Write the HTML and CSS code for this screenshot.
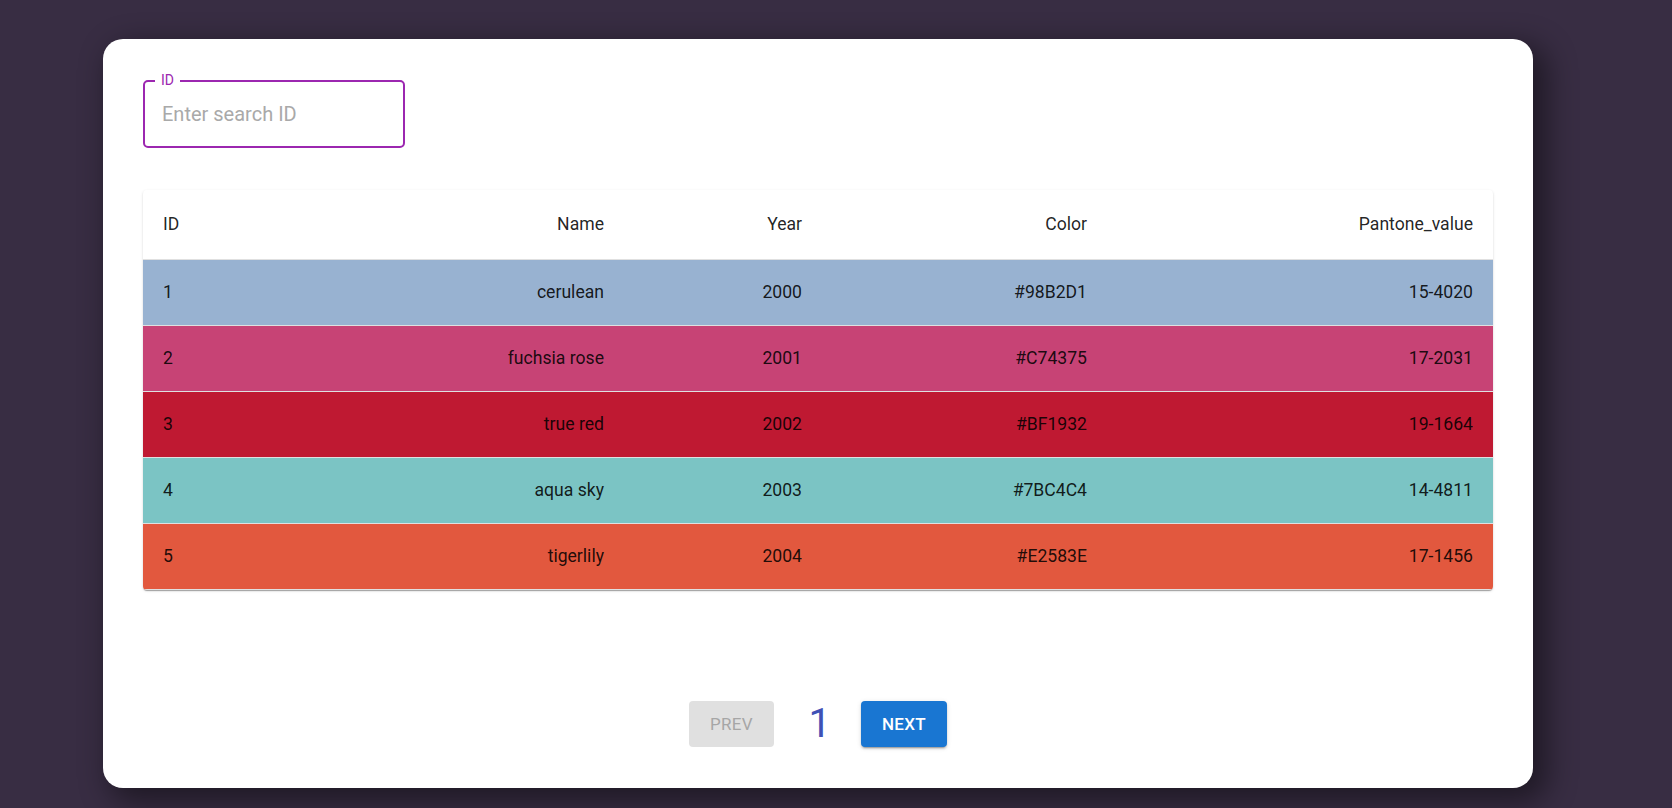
FILE: index.html
```html
<!DOCTYPE html>
<html lang="en">
<head>
<meta charset="utf-8">
<title>Colors</title>
<link rel="stylesheet" href="styles.css">
</head>
<body>
<main class="page">
  <section class="card">
    <div class="field">
      <label class="field-label" for="search">ID</label>
      <input class="field-input" id="search" type="text" placeholder="Enter search ID">
    </div>

    <div class="table-wrap">
      <table class="table">
        <colgroup>
          <col class="c-id">
          <col class="c-name">
          <col class="c-year">
          <col class="c-color">
          <col class="c-pantone">
        </colgroup>
        <thead>
          <tr>
            <th class="left">ID</th>
            <th>Name</th>
            <th>Year</th>
            <th>Color</th>
            <th>Pantone_value</th>
          </tr>
        </thead>
        <tbody>
          <tr class="r-cerulean">
            <td class="left">1</td><td>cerulean</td><td>2000</td><td>#98B2D1</td><td>15-4020</td>
          </tr>
          <tr class="r-fuchsia">
            <td class="left">2</td><td>fuchsia rose</td><td>2001</td><td>#C74375</td><td>17-2031</td>
          </tr>
          <tr class="r-red">
            <td class="left">3</td><td>true red</td><td>2002</td><td>#BF1932</td><td>19-1664</td>
          </tr>
          <tr class="r-aqua">
            <td class="left">4</td><td>aqua sky</td><td>2003</td><td>#7BC4C4</td><td>14-4811</td>
          </tr>
          <tr class="r-tiger">
            <td class="left">5</td><td>tigerlily</td><td>2004</td><td>#E2583E</td><td>17-1456</td>
          </tr>
        </tbody>
      </table>
    </div>

    <nav class="pager">
      <button class="btn btn-disabled" disabled>PREV</button>
      <span class="page-num">1</span>
      <button class="btn btn-primary">NEXT</button>
    </nav>
  </section>
</main>
</body>
</html>
```

FILE: styles.css
```css
* { box-sizing: border-box; }

html, body {
  margin: 0;
  padding: 0;
}

body {
  background: #382d43;
  font-family: Roboto, "Liberation Sans", Arial, sans-serif;
  color: rgba(0, 0, 0, 0.87);
  height: 808px;
  overflow: hidden;
}

.page {
  padding: 39px 0 0 103px;
}

.card {
  width: 1430px;
  height: 749px;
  background: #ffffff;
  border-radius: 20px;
  padding: 41px 40px 41px 40px;
  box-shadow: 10px 10px 30px 4px rgba(0, 0, 0, 0.45);
  display: flex;
  flex-direction: column;
}

/* outlined text field */
.field {
  position: relative;
  width: 262px;
  height: 68px;
  border: 2px solid #9c27b0;
  border-radius: 5px;
  display: flex;
  align-items: center;
}

.field-label {
  position: absolute;
  top: -10px;
  left: 10px;
  padding: 0 6px;
  background: #ffffff;
  color: #9c27b0;
  font-size: 14px;
  line-height: 16px;
}

.field-input {
  border: 0;
  outline: 0;
  width: 100%;
  padding: 0 17px;
  font-family: inherit;
  font-size: 20px;
  color: rgba(0, 0, 0, 0.87);
  background: transparent;
}

.field-input::placeholder {
  color: #a9a9a9;
  opacity: 1;
}

/* table */
.table-wrap {
  margin-top: 42px;
  border-radius: 4px;
  overflow: hidden;
  box-shadow: 0 2px 1px -1px rgba(0, 0, 0, 0.2),
              0 1px 1px 0 rgba(0, 0, 0, 0.14),
              0 1px 3px 0 rgba(0, 0, 0, 0.12);
}

.table {
  width: 100%;
  border-collapse: collapse;
  table-layout: fixed;
  font-size: 17.6px;
}

.c-id { width: 240px; }
.c-name { width: 241px; }
.c-year { width: 198px; }
.c-color { width: 285px; }
.c-pantone { width: 386px; }

.table th,
.table td {
  padding: 20px;
  text-align: right;
  border-bottom: 1px solid rgba(224, 224, 224, 1);
  font-weight: 400;
  white-space: nowrap;
  color: rgba(0, 0, 0, 0.87);
}

.table th {
  line-height: 29px;
}

.table td {
  line-height: 25px;
}

.table .left { text-align: left; }

.r-cerulean { background: #98b2d1; }
.r-fuchsia { background: #c74375; }
.r-red { background: #bf1932; }
.r-aqua { background: #7bc4c4; }
.r-tiger { background: #e2583e; }

/* pagination */
.pager {
  margin-top: 111px;
  display: flex;
  justify-content: center;
  align-items: center;
}

.btn {
  width: 85px;
  height: 46px;
  border: 0;
  border-radius: 4px;
  font-family: inherit;
  font-size: 17px;
  font-weight: 500;
  letter-spacing: 0.02em;
  text-transform: uppercase;
  padding: 0;
}

.btn-disabled {
  background: #e0e0e0;
  color: #a6a6a6;
  font-weight: 400;
}

.btn-primary {
  width: 86px;
  background: #1976d2;
  color: #ffffff;
  box-shadow: 0 3px 1px -2px rgba(0, 0, 0, 0.2),
              0 2px 2px 0 rgba(0, 0, 0, 0.14),
              0 1px 5px 0 rgba(0, 0, 0, 0.12);
}

.page-num {
  margin: 0 30px 0 34.5px;
  font-size: 40px;
  line-height: 46px;
  color: #3f51b5;
}
```
